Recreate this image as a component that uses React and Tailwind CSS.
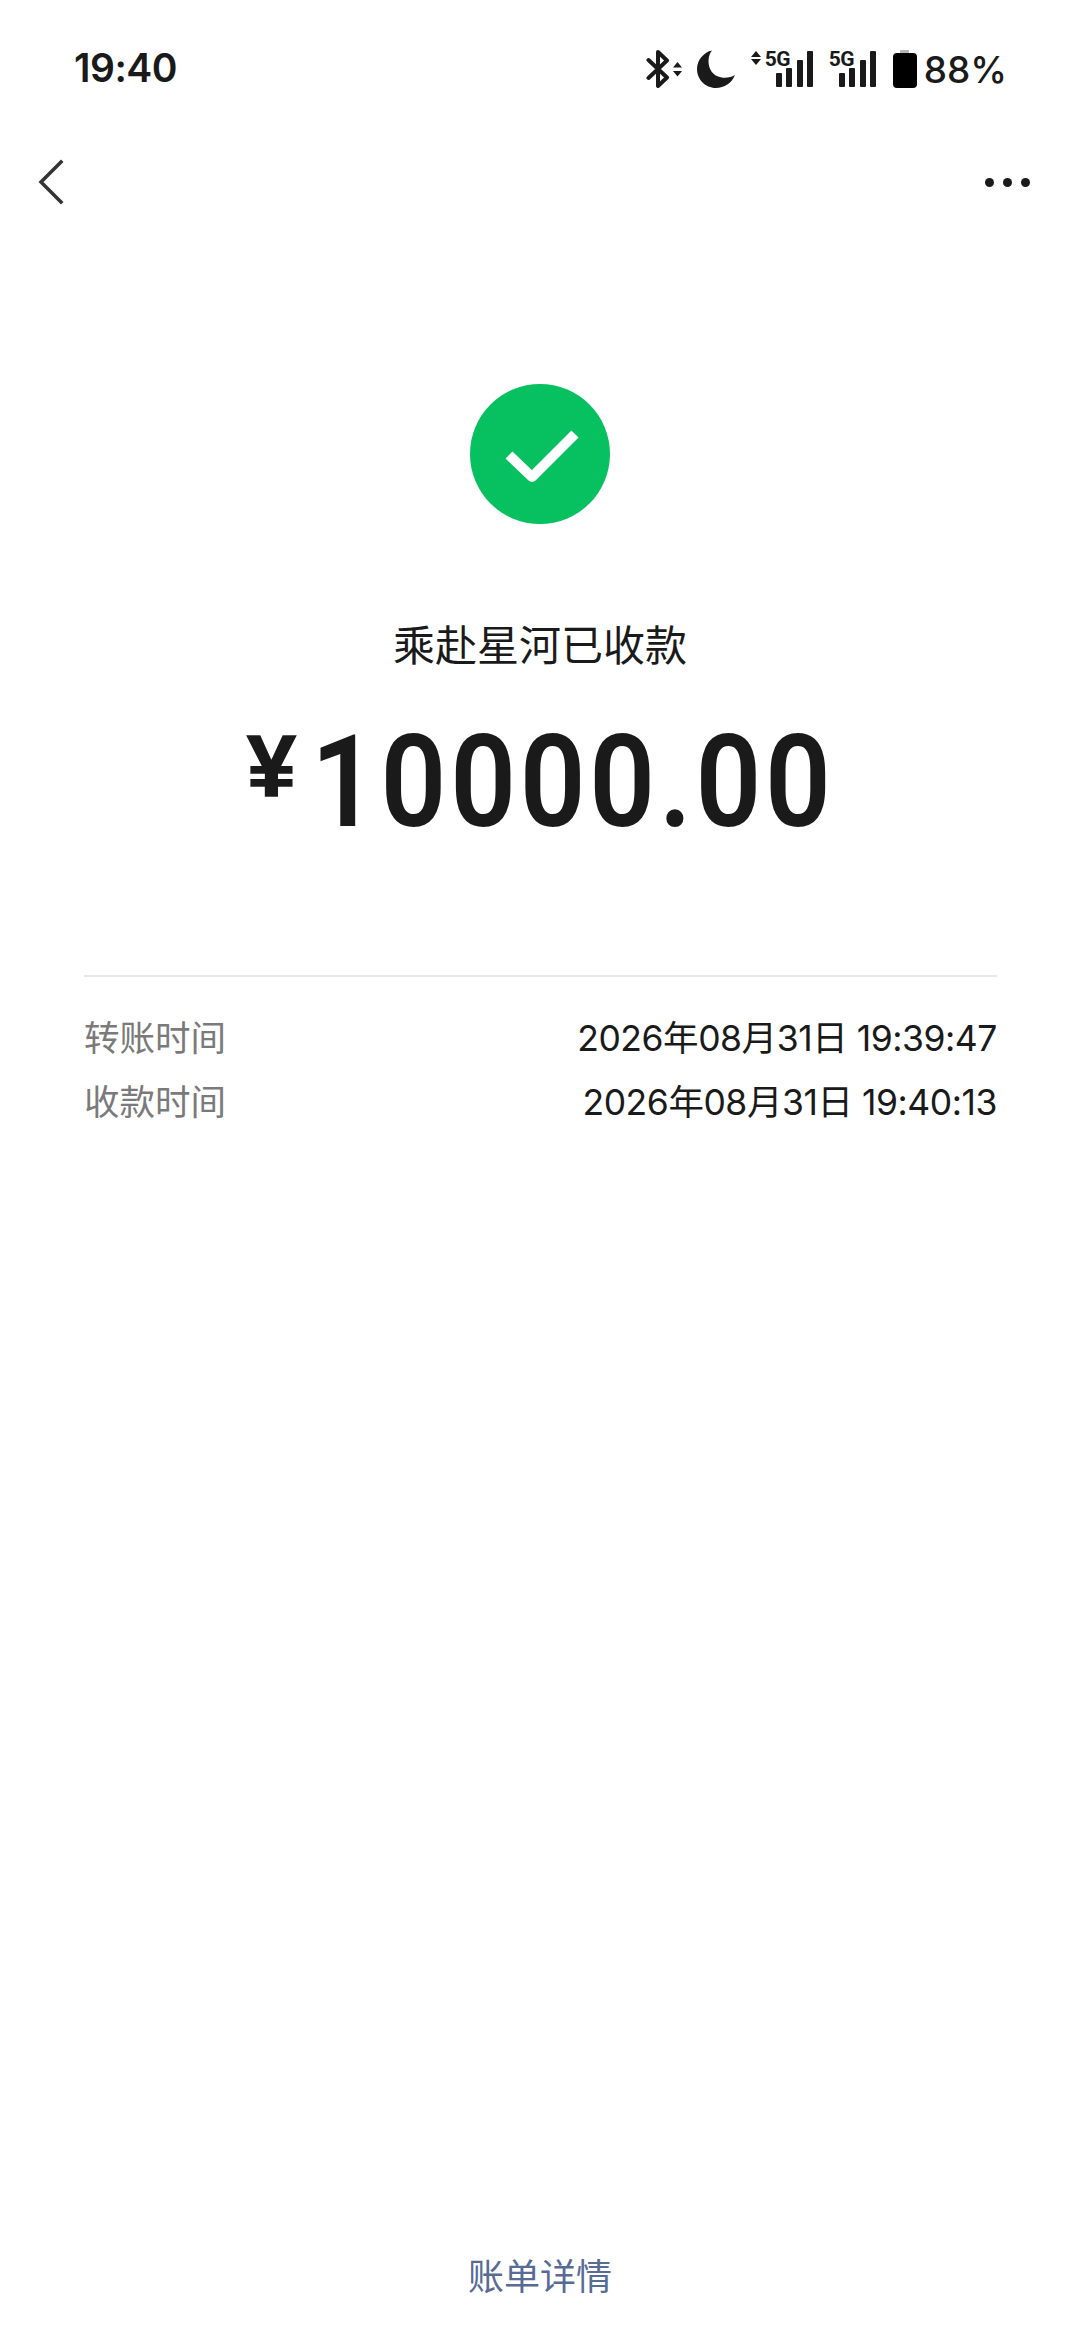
import React from "react";

const sans = "font-['Inter','Noto_Sans_CJK_SC',sans-serif]";

const Bluetooth = () => (
  <svg width="36" height="38" viewBox="0 0 36 38" fill="none" className="shrink-0">
    <path d="M2.5 10 L21 27.5 L12 36 V2 L21 10.5 L2.5 28" stroke="#1a1a1a" strokeWidth="4" strokeLinejoin="round" strokeLinecap="round" />
    <path d="M27 17.5 L31.5 12 L36 17.5 Z M27 21 H36 L31.5 26.5 Z" fill="#1a1a1a" />
  </svg>
);

const Moon = () => (
  <svg width="38" height="38" viewBox="0 0 38 38" className="shrink-0">
    <path d="M15 0.5 C9 8 11 22 20 26 C26 29 33 28 38 25 C35 33 27 38 19 38 C8 38 0 29 0 19 C0 10 7 2 15 0.5 Z" fill="#1a1a1a" />
  </svg>
);

const Signal = ({ arrows }) => (
  <div className={`relative h-[38px] shrink-0 ${arrows ? "w-[62px]" : "w-[47px]"}`}>
    {arrows && (
      <svg width="10" height="14" viewBox="0 0 10 14" className="absolute left-0 top-[1px]">
        <path d="M0 6 L5 0 L10 6 Z M0 8 H10 L5 14 Z" fill="#1a1a1a" />
      </svg>
    )}
    <span className={`absolute top-[-1px] font-['Roboto',sans-serif] text-[21px] leading-[20px] font-bold tracking-[-0.5px] text-[#1a1a1a] ${arrows ? "left-[14px]" : "left-0"}`}>
      5G
    </span>
    <div className="absolute right-0 bottom-[1px] flex items-end gap-[4px]">
      <div className="h-[14px] w-[6px] rounded-[1px] bg-[#1a1a1a]" />
      <div className="h-[19px] w-[6px] rounded-[1px] bg-[#1a1a1a]" />
      <div className="ml-[1px] h-[27px] w-[6px] rounded-[1px] bg-[#1a1a1a]" />
      <div className="h-[36px] w-[6px] rounded-[1px] bg-[#1a1a1a]" />
    </div>
  </div>
);

const Battery = () => (
  <div className="flex shrink-0 flex-col items-center">
    <div className="h-[3px] w-[9px] rounded-t-[1px] bg-[#b5b5b5]" />
    <div className="h-[35px] w-[24px] rounded-[4px] bg-black" />
  </div>
);

const TimeRow = ({ label, value }) => (
  <div className="flex h-[64px] items-center justify-between">
    <span className="text-[35.5px] text-[#7a7a7a]">{label}</span>
    <span className="text-[35.5px] tracking-[-0.45px] text-[#1a1a1a]">{value}</span>
  </div>
);

export default function App() {
  return (
    <div className={`flex h-[2344px] w-[1080px] flex-col overflow-hidden bg-white ${sans}`}>
      <div className="flex h-[136px] items-center justify-between pr-[73px] pl-[74px]">
        <span className="mb-[2px] text-[39px] leading-none font-semibold tracking-[-0.5px] text-[#1a1a1a]">19:40</span>
        <div className="mt-[2px] flex items-center">
          <Bluetooth />
          <div className="ml-[15px]">
            <Moon />
          </div>
          <div className="ml-[16px]">
            <Signal arrows />
          </div>
          <div className="ml-[16px]">
            <Signal />
          </div>
          <div className="ml-[17px]">
            <Battery />
          </div>
          <span className="ml-[7px] text-[37px] leading-none font-medium text-[#1a1a1a]">88%</span>
        </div>
      </div>

      <div className="flex h-[92px] items-center justify-between pr-[50px] pl-[38px]">
        <svg width="26" height="46" viewBox="0 0 26 46" fill="none">
          <path d="M23 3 L3 23 L23 43" stroke="#333333" strokeWidth="3.5" strokeLinecap="square" />
        </svg>
        <div className="flex gap-[9px]">
          <div className="h-[9px] w-[9px] rounded-full bg-[#1a1a1a]" />
          <div className="h-[9px] w-[9px] rounded-full bg-[#1a1a1a]" />
          <div className="h-[9px] w-[9px] rounded-full bg-[#1a1a1a]" />
        </div>
      </div>

      <div className="mt-[156px] flex flex-col items-center">
        <div className="flex h-[140px] w-[140px] items-center justify-center rounded-full bg-[#07c160]">
          <svg width="84" height="60" viewBox="0 0 84 60" fill="none">
            <path d="M11 31 L34 53 L77 10" stroke="white" strokeWidth="10" strokeLinejoin="round" />
          </svg>
        </div>
        <div className="mt-[97px] text-[42px] leading-[50px] text-[#1a1a1a]">乘赴星河已收款</div>
        <div className="mt-[56px] flex h-[110px] w-[586px] items-center text-[#1a1a1a]">
          <span className="mb-[32px] font-['Liberation_Sans',sans-serif] text-[88px] leading-none font-bold [-webkit-text-stroke:1.5px_#1a1a1a]">¥</span>
          <span className="ml-[15px] origin-left scale-x-[0.9] font-['Roboto',sans-serif] text-[128px] leading-none font-semibold tracking-[4.2px]">10000.00</span>
        </div>
      </div>

      <div className="mr-[83px] ml-[84px] mt-[138px] border-t-2 border-[#e8e8e8] pt-[30px]">
        <TimeRow label="转账时间" value="2026年08月31日 19:39:47" />
        <TimeRow label="收款时间" value="2026年08月31日 19:40:13" />
      </div>

      <div className="mt-auto flex justify-center pb-[44px]">
        <span className="text-[36px] leading-[46px] text-[#576b95]">账单详情</span>
      </div>
    </div>
  );
}
